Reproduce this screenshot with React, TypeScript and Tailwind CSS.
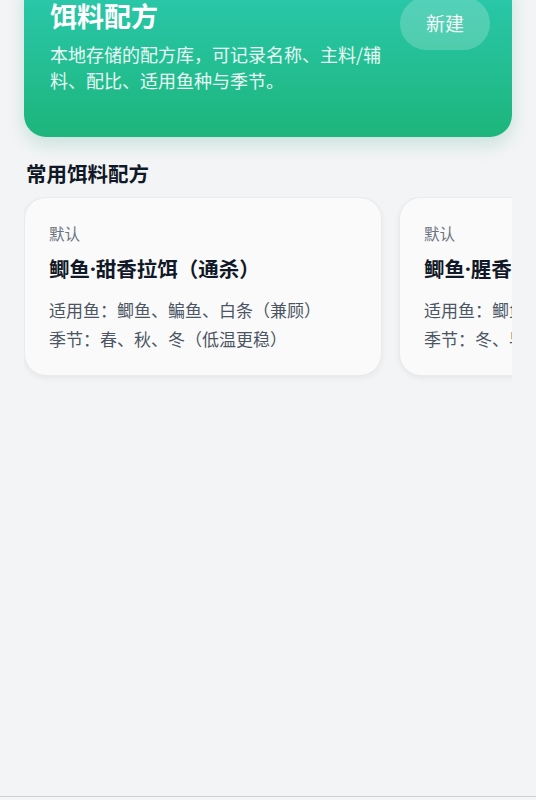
import React from "react";

const recipes = [
  {
    tag: "默认",
    a: "鲫鱼",
    b: "甜香拉饵（通杀）",
    fish: "适用鱼：鲫鱼、鳊鱼、白条（兼顾）",
    season: "季节：春、秋、冬（低温更稳）",
  },
  {
    tag: "默认",
    a: "鲫鱼",
    b: "腥香窝料（冬季）",
    fish: "适用鱼：鲫鱼、鲤鱼",
    season: "季节：冬、早春",
  },
];

export default function App() {
  return (
    <div
      className="h-[800px] w-[536px] overflow-hidden bg-[#f3f4f6] flex flex-col"
      style={{ fontFamily: '"Noto Sans CJK SC", "Noto Sans", sans-serif' }}
    >
      <div className="px-6 flex-1">
        <div className="-mt-[27px] rounded-[22px] bg-linear-to-b from-[#2ccab1] to-[#1db57b] pl-[26px] pr-[22px] pt-6 pb-[44px] shadow-[0_8px_18px_rgba(16,150,100,0.18)] flex items-start justify-between">
          <div className="flex flex-col">
            <h1 className="text-[27px] leading-[37px] font-bold text-white">饵料配方</h1>
            <p className="mt-[8px] w-[340px] text-[18px] leading-[25.6px] text-white/90">
              本地存储的配方库，可记录名称、主料/辅料、配比、适用鱼种与季节。
            </p>
          </div>
          <button className="h-[53px] w-[90px] rounded-full bg-white/20 text-[19px] text-white/95 flex items-center justify-center">
            新建
          </button>
        </div>

        <h2 className="mt-[22px] text-[20.5px] leading-[28px] font-bold text-[#111827] pl-[2px]">常用饵料配方</h2>

        <div className="mt-[10px] flex gap-[17px] overflow-hidden pb-4">
          {recipes.map((r, i) => (
            <div
              key={i}
              className="shrink-0 w-[358px] rounded-[22px] bg-[#fafafa] border border-[#e9eaec] shadow-[0_2px_6px_rgba(0,0,0,0.06)] pl-[24px] pr-4 pt-[24px] pb-[22px]"
            >
              <div className="text-[15.5px] leading-[22px] text-[#6b7280]">{r.tag}</div>
              <div className="mt-[10px] text-[20.5px] leading-[28px] font-bold text-[#111827] whitespace-nowrap">
                {r.a}
                <span style={{ fontFamily: '"Noto Sans", sans-serif' }}>·</span>
                {r.b}
              </div>
              <div className="mt-[12px] text-[17px] leading-[29px] text-[#4b5563] whitespace-nowrap">{r.fish}</div>
              <div className="text-[17px] leading-[29px] text-[#4b5563] whitespace-nowrap">{r.season}</div>
            </div>
          ))}
        </div>
      </div>
      <div className="h-[4px] border-t border-[#cfcfcf] bg-[#f5f5f5]" />
    </div>
  );
}
